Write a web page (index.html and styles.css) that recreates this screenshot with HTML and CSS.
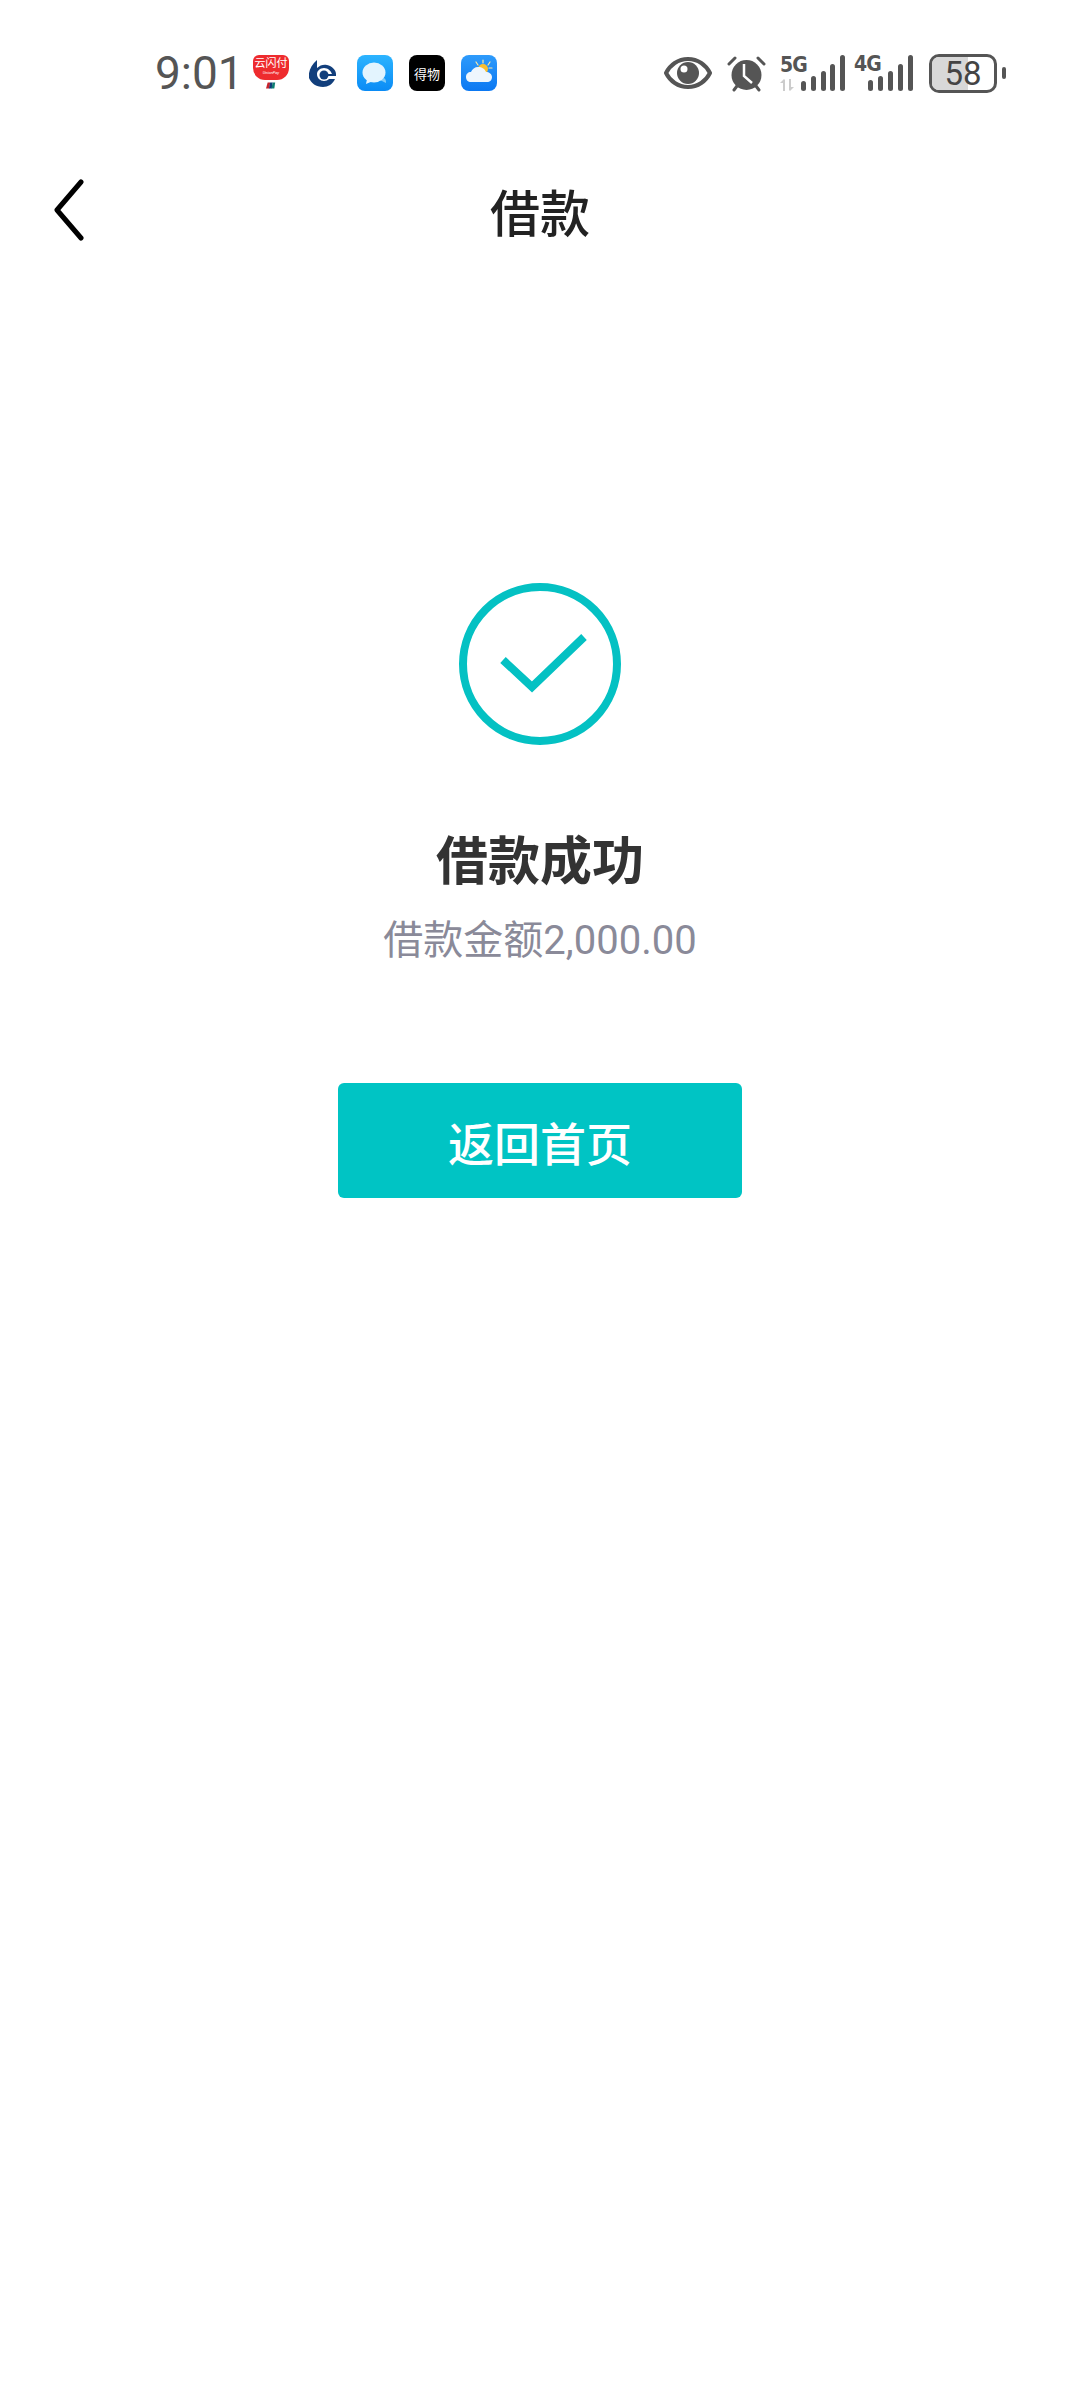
FILE: index.html
```html
<html>
<head>
    <title>借款</title>
    <meta charset="utf-8">
    <link rel="stylesheet" href="styles.css">
</head>
<body>
    <div class="statusbar">
        <div class="status-left">
            <span class="time">9:01</span>
            <div class="app app-unionpay">
                <span class="up-badge">
                    <span class="up-name">云闪付</span>
                    <span class="up-sub">UnionPay</span>
                </span>
                <svg class="up-flag" viewBox="0 0 12 7"><path d="M2 0h3L4 7H0z" fill="#c8232c"/><path d="M5 0h3L7 7H3.500z" fill="#123c7a"/><path d="M8 0h3l-1 7H6.500z" fill="#0e7f73"/></svg>
            </div>
            <svg class="app app-bank" viewBox="0 0 27 27">
                <path d="M8 0v8c3-3 7-4 10-3 5 1 9 5 9 9h-4c-1-3-4-6-8-6-4 0-7 3-7 6 0 4 3 7 7 7 2 0 4-1 5-2h6c-2 5-7 8-12 8-7 0-12-4-14-9C-1 12 2 5 8 0z" fill="#123f7c"/>
                <circle cx="15" cy="15" r="4.500" fill="#123f7c"/>
                <path d="M19 14h8v2h-8z" fill="#123f7c"/>
            </svg>
            <svg class="app app-msg" viewBox="0 0 36 36">
                <defs>
                    <linearGradient id="msgbg" x1="0" y1="0" x2="0" y2="1"><stop offset="0" stop-color="#2cb4ff"/><stop offset="1" stop-color="#0a8bf5"/></linearGradient>
                </defs>
                <rect width="36" height="36" rx="8" fill="url(#msgbg)"/>
                <path d="M27 23c2 1 2 3 2 5l-4-2-5-1z" fill="#7fcaf8"/>
                <ellipse cx="17" cy="17.500" rx="11.500" ry="10" fill="#e3f4fe"/>
                <path d="M10 24l-1 5 7-3z" fill="#e3f4fe"/>
            </svg>
            <div class="app app-dewu">得物</div>
            <svg class="app app-weather" viewBox="0 0 36 36">
                <defs>
                    <linearGradient id="wxbg" x1="0" y1="0" x2="0" y2="1"><stop offset="0" stop-color="#2e9bfb"/><stop offset="1" stop-color="#0b78f2"/></linearGradient>
                </defs>
                <rect width="36" height="36" rx="8" fill="url(#wxbg)"/>
                <path d="M22 5v3M15 7l2 3M29 7l-2 3M31 13h-3" stroke="#ffe9a0" stroke-width="1.200" stroke-linecap="round"/>
                <circle cx="22" cy="14" r="5" fill="#fbbf2e"/>
                <path d="M10 27c-3 0-5-2-5-5s2-5 5-5c1-3 4-5 7-5 4 0 7 2 8 5 3 0 6 2 6 5s-2 5-5 5z" fill="#eef6fd"/>
            </svg>
        </div>
        <div class="status-right">
            <svg class="ico-eye" viewBox="0 0 48 32">
                <path d="M24 2C14 2 6 8 2 16c4 8 12 14 22 14s18-6 22-14C42 8 34 2 24 2z" fill="none" stroke="#555" stroke-width="4" stroke-linejoin="round"/>
                <circle cx="24" cy="16" r="11" fill="#555"/>
                <circle cx="20" cy="12" r="3.500" fill="#fff"/>
            </svg>
            <svg class="ico-alarm" viewBox="0 0 39 37">
                <circle cx="19.500" cy="20" r="15" fill="#555"/>
                <path d="M2 9l6-6M37 9l-6-6M7 35l3-4M32 35l-3-4" stroke="#555" stroke-width="3" stroke-linecap="round"/>
                <path d="M17 9v12l8 7" fill="none" stroke="#fff" stroke-width="2.500"/>
            </svg>
            <div class="signal sig-5g">
                <div class="net">
                    <span class="net-label">5G</span>
                    <svg class="net-arrows" viewBox="0 0 14 12"><path d="M3 12V4H0l4-4 1 1v11zM9 0h2v8h3l-4 4-1-1z" fill="#ccc"/></svg>
                </div>
                <svg class="bars bars-5g" viewBox="0 0 44 36">
                    <rect x="0" y="26" width="5" height="10" rx="2.500"/>
                    <rect x="10" y="21" width="5" height="15" rx="2.500"/>
                    <rect x="20" y="16" width="5" height="20" rx="2.500"/>
                    <rect x="29" y="9" width="5" height="27" rx="2.500"/>
                    <rect x="39" y="0" width="5" height="36" rx="2.500"/>
                </svg>
            </div>
            <div class="signal sig-4g">
                <span class="net-label net-label-4g">4G</span>
                <svg class="bars bars-4g" viewBox="0 0 45 36">
                    <rect x="0" y="25" width="5" height="11" rx="2.500"/>
                    <rect x="10" y="21" width="5" height="15" rx="2.500"/>
                    <rect x="20" y="16" width="5" height="20" rx="2.500"/>
                    <rect x="30" y="9" width="5" height="27" rx="2.500"/>
                    <rect x="40" y="0" width="5" height="36" rx="2.500"/>
                </svg>
            </div>
            <div class="battery">
                <div class="battery-body">
                    <div class="battery-level" style="width: 58%"></div>
                    <span class="battery-num">58</span>
                </div>
                <div class="battery-nub"></div>
            </div>
        </div>
    </div>

    <div class="navbar">
        <svg class="back" viewBox="0 0 32 62"><path d="M28 3L4 31l24 28" fill="none" stroke="#000" stroke-width="5" stroke-linecap="round" stroke-linejoin="round"/></svg>
        <h1 class="nav-title">借款</h1>
    </div>

    <div class="result">
        <svg class="result-icon" viewBox="0 0 162 162">
            <circle cx="81" cy="81" r="77" fill="none" stroke="#04c1c3" stroke-width="8"/>
            <path d="M44 77l29 27 52-50" fill="none" stroke="#04c1c3" stroke-width="8"/>
        </svg>
        <h2 class="result-title">借款成功</h2>
        <p class="result-amount">借款金额2,000.00</p>
        <button class="home-btn">返回首页</button>
    </div>
</body>
</html>
```

FILE: styles.css
```css
* {
    box-sizing: border-box;
}
body {
    margin: 0;
    background: #fff;
    font-family: Roboto, "Noto Sans CJK SC", sans-serif;
    color: #333;
}

.statusbar {
    height: 146px;
    padding: 0 74px 0 155px;
    display: flex;
    align-items: center;
    justify-content: space-between;
}
.status-left {
    display: flex;
    align-items: center;
}
.status-right {
    display: flex;
    align-items: center;
}
.time {
    width: 98px;
    font-size: 46px;
    line-height: 50px;
    color: #555;
}
.app {
    flex: none;
    width: 36px;
    height: 36px;
    margin-right: 16px;
}
.app-unionpay {
    position: relative;
    height: 36px;
    margin-right: 20px;
}
.up-badge {
    display: flex;
    flex-direction: column;
    align-items: center;
    height: 25px;
    padding-top: 3px;
    background: #ee2b2e;
    border-radius: 6px 6px 12px 12px;
    color: #fff;
}
.up-name {
    font-size: 11px;
    line-height: 12px;
}
.up-sub {
    font-size: 4px;
    line-height: 6px;
    font-style: italic;
}
.up-flag {
    display: block;
    width: 10px;
    height: 7px;
    margin: 2px 0 0 13px;
}
.app-bank {
    width: 27px;
    height: 27px;
    margin-right: 21px;
}
.app-dewu {
    display: flex;
    align-items: center;
    justify-content: center;
    background: #000;
    border-radius: 8px;
    color: #fff;
    font-size: 13px;
}

.ico-eye {
    width: 48px;
    height: 32px;
    margin-right: 15px;
}
.ico-alarm {
    width: 39px;
    height: 37px;
    margin-right: 14px;
}
.signal {
    display: flex;
    align-items: flex-end;
    height: 36px;
}
.sig-5g {
    margin-right: 16px;
}
.sig-4g {
    position: relative;
    width: 52px;
    justify-content: flex-end;
    margin-right: 16px;
}
.net {
    display: flex;
    flex-direction: column;
    width: 21px;
    height: 36px;
}
.net-label {
    font-family: "Liberation Sans Narrow", "DejaVu Sans Condensed", Roboto, sans-serif;
    font-size: 21px;
    font-weight: 700;
    line-height: 20px;
    color: #555;
    letter-spacing: -1px;
}
.net-label-4g {
    position: absolute;
    left: -7px;
    top: -1px;
}
.net-arrows {
    width: 14px;
    height: 12px;
    margin-top: 4px;
}
.bars {
    height: 36px;
    fill: #555;
}
.bars-5g {
    width: 44px;
}
.bars-4g {
    width: 45px;
}
.battery {
    display: flex;
    align-items: center;
}
.battery-body {
    position: relative;
    width: 68px;
    height: 39px;
    border: 3px solid #555;
    border-radius: 10px;
    overflow: hidden;
    display: flex;
    align-items: center;
    justify-content: center;
}
.battery-level {
    position: absolute;
    left: 0;
    top: 0;
    bottom: 0;
    background: #d8d8d8;
}
.battery-num {
    position: relative;
    font-size: 33px;
    line-height: 33px;
    color: #444;
}
.battery-nub {
    width: 4px;
    height: 12px;
    margin-left: 5px;
    background: #555;
    border-radius: 2px;
}

.navbar {
    position: relative;
    height: 128px;
    display: flex;
    align-items: center;
    justify-content: center;
}
.back {
    position: absolute;
    left: 53px;
    top: 33px;
    width: 32px;
    height: 62px;
}
.nav-title {
    margin: 0;
    font-size: 50px;
    font-weight: 500;
    color: #222;
}

.result {
    display: flex;
    flex-direction: column;
    align-items: center;
    padding-top: 309px;
}
.result-icon {
    width: 162px;
    height: 162px;
}
.result-title {
    margin: 82px 0 0;
    font-size: 52px;
    line-height: 72px;
    font-weight: 700;
    color: #333;
}
.result-amount {
    margin: 14px 0 0;
    font-size: 40px;
    line-height: 56px;
    color: #8a8a99;
}
.home-btn {
    width: 404px;
    height: 115px;
    margin-top: 114px;
    border: none;
    border-radius: 6px;
    background: #00c4c4;
    color: #fff;
    font-family: inherit;
    font-size: 46px;
    font-weight: 500;
}
```
